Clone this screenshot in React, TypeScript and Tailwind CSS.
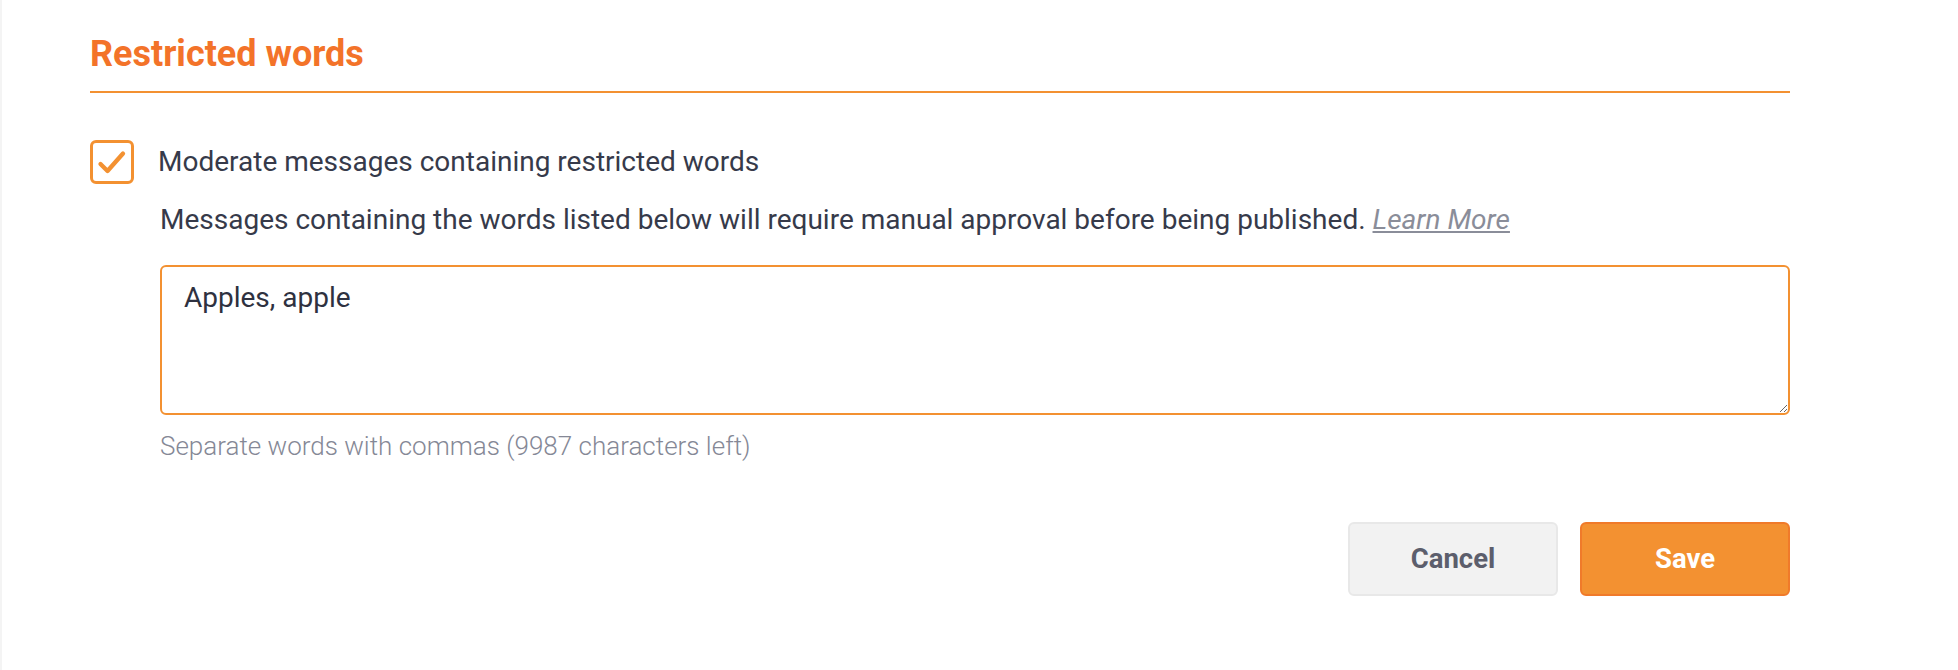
import React, { useState } from "react";

const CheckMark: React.FC = () => (
  <svg viewBox="0 0 38 38" className="w-full h-full" fill="none">
    <polyline
      points="7.5,21 14.5,28 30,10.5"
      stroke="#f39131"
      strokeWidth="4.3"
      strokeLinecap="round"
      strokeLinejoin="round"
    />
  </svg>
);

export default function App() {
  const [checked, setChecked] = useState(true);
  const [words, setWords] = useState("Apples, apple");

  return (
    <div className="min-h-screen w-full bg-white border-l-2 border-[#f4f4f4] font-['Roboto',sans-serif]">
      <div className="ml-[88px] w-[1700px]">
        <h2 className="pt-[36px] pb-[19px] text-[36px] leading-[36px] font-bold text-[#f37329] border-b-2 border-[#f39131]">
          Restricted words
        </h2>

        <label className="mt-[47px] flex items-center gap-[24px] cursor-pointer">
          <span
            className="w-[44px] h-[44px] shrink-0 rounded-[6px] border-[3px] border-[#f39131] bg-white"
            onClick={() => setChecked(!checked)}
          >
            {checked && <CheckMark />}
          </span>
          <span className="text-[28px] leading-[44px] text-[#363a4a]">
            Moderate messages containing restricted words
          </span>
        </label>

        <div className="ml-[70px]">
          <p className="mt-[19px] text-[28px] leading-[34px] text-[#363a4a]">
            Messages containing the words listed below will require manual approval before being published.{" "}
            <a href="#" className="italic underline text-[#8a8d99]">
              Learn More
            </a>
          </p>

          <textarea
            value={words}
            onChange={(e) => setWords(e.target.value)}
            className="mt-[28px] block w-[1630px] h-[150px] rounded-[6px] border-2 border-[#f39131] px-[22px] pt-[13px] text-[28px] leading-[36px] text-[#2e3140] outline-none"
          />

          <p className="mt-[13px] text-[26px] leading-[36px] font-light text-[#858896]">
            Separate words with commas ({10000 - words.length} characters left)
          </p>
        </div>

        <div className="mt-[58px] flex justify-end gap-[22px]">
          <button className="w-[210px] h-[74px] rounded-[6px] border-2 border-[#e8e8e8] bg-[#f2f2f2] text-[27.5px] font-bold text-[#5c5e6c]">
            Cancel
          </button>
          <button className="w-[210px] h-[74px] rounded-[6px] border-2 border-[#f07a2a] bg-[#f39131] text-[27.5px] font-bold text-white">
            Save
          </button>
        </div>
      </div>
    </div>
  );
}
